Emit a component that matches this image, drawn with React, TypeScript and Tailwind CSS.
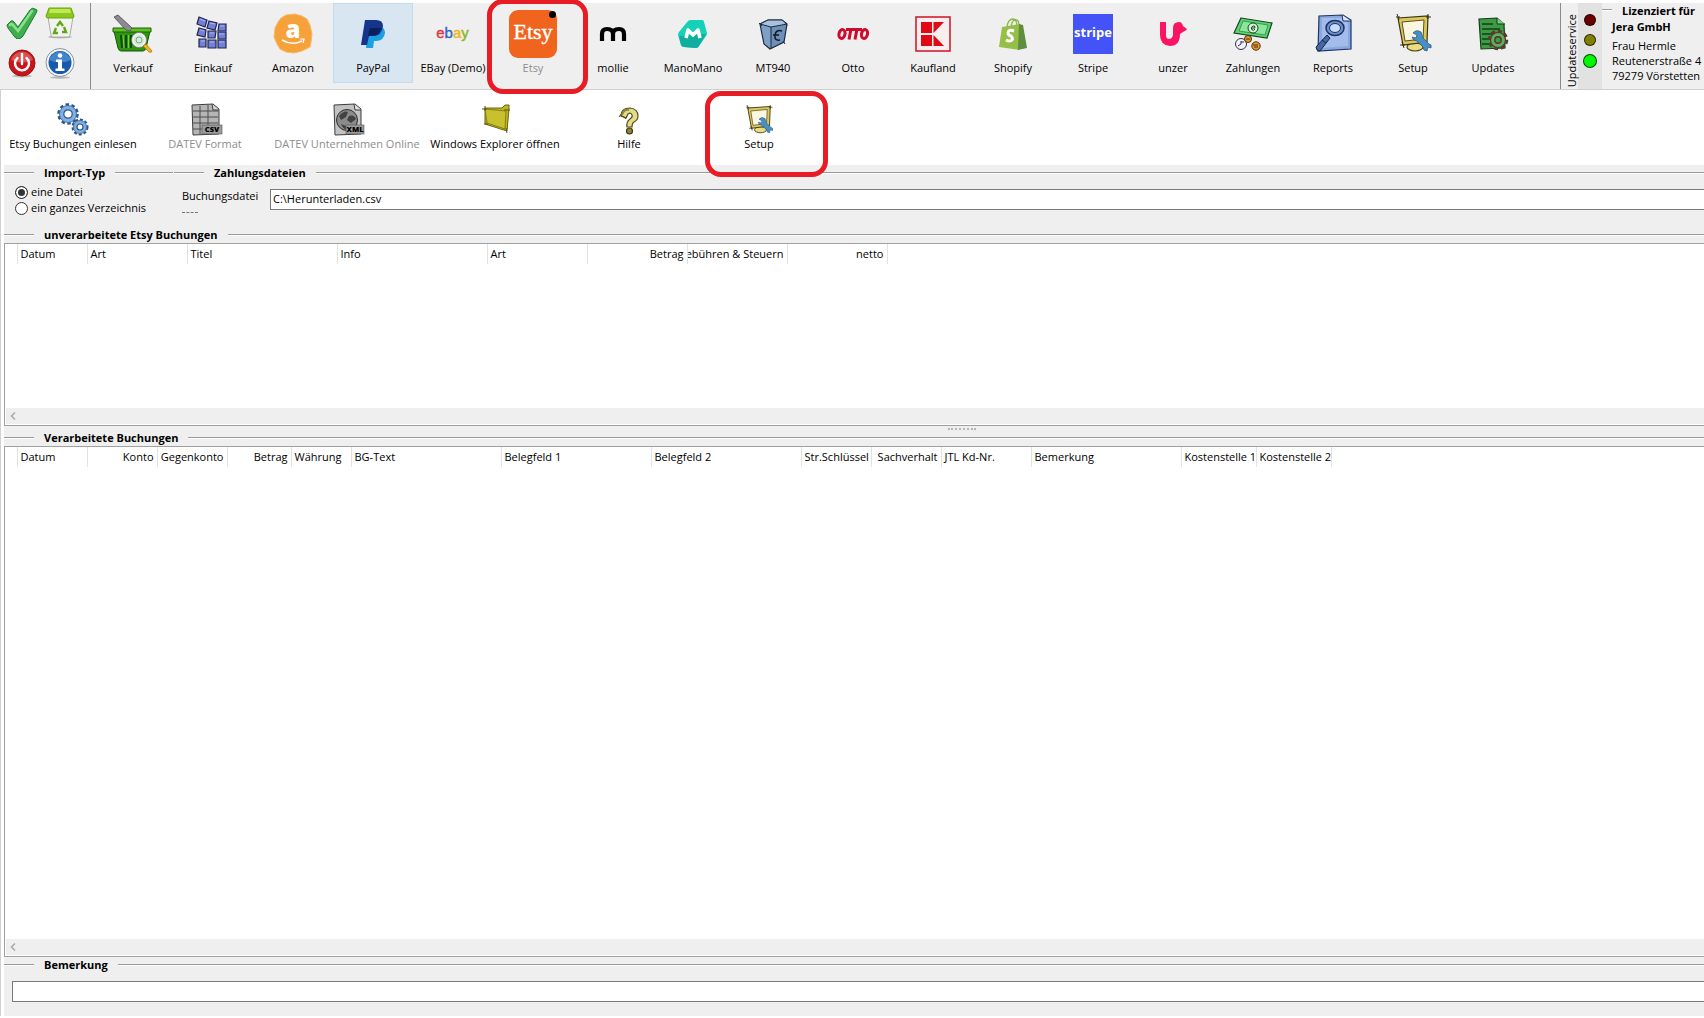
import type { ReactNode } from "react";

type IconProps = {
  className?: string;
};

type ToolItem = {
  label: string;
  icon: ReactNode;
  active?: boolean;
  disabled?: boolean;
  marked?: boolean;
};

type ActionItem = {
  label: string;
  icon: ReactNode;
  width: string;
  disabled?: boolean;
  marked?: boolean;
};

type Column = {
  label: string;
  width: string;
  right?: boolean;
};

const CheckIcon = () => (
  <svg className="w-8 h-8" viewBox="0 0 32 32">
    <path d="M1 18 5 14q2-1 3 1l4 5L24 3q2-3 5-1l2 1q0 2-2 5L17 29q-2 3-5 3-2 0-4-3L2 21q-1-2-1-3z" fill="#3fae4d" stroke="#1d7a35" strokeWidth="1" />
    <path d="M4 18q2-2 3 0l5 6L26 4" fill="none" stroke="#8be08c" strokeWidth="2.5" strokeLinecap="round" />
  </svg>
);

const BinIcon = () => (
  <svg className="w-8 h-8" viewBox="0 0 32 32">
    <ellipse cx="16" cy="30" rx="12" ry="1.5" fill="#b5b5b5" />
    <path d="M4 10h25l-3 18q0 2-2 2H9q-2 0-2-2z" fill="#f1f3ef" stroke="#a9aca6" />
    <path d="M5 1h22l3 8q0 2-2 2H4q-2 0-2-2z" fill="#8cc81e" stroke="#6ba50c" />
    <path d="M6 2h20l1 4H5z" fill="#c0e95a" />
    <path d="m13 19 3-4 3 4M20 20l2 5h-4M14 26h-4l2-5" fill="none" stroke="#62a51a" strokeWidth="2.4" />
  </svg>
);

const PowerIcon = () => (
  <svg className="w-8 h-8" viewBox="0 0 32 32">
    <ellipse cx="16" cy="29" rx="10" ry="1.5" fill="#bdbdbd" />
    <circle cx="16" cy="16" r="13" fill="#c9141c" stroke="#93191c" />
    <path d="M5 13a11.5 11.5 0 0 1 22 0q-11 5-22 0z" fill="#dc5050" />
    <path d="M11.5 11a7 7 0 1 0 9 0M16 7v10" fill="none" stroke="#fff" strokeWidth="2.4" strokeLinecap="round" />
  </svg>
);

const InfoIcon = () => (
  <svg className="w-8 h-8" viewBox="0 0 32 32">
    <ellipse cx="16" cy="30.5" rx="10" ry="1.2" fill="#b5b5b5" />
    <circle cx="16" cy="15.5" r="14" fill="#f5f5f5" stroke="#8d9299" />
    <circle cx="16" cy="15.5" r="11.5" fill="#1659ad" />
    <path d="M5 13a11.5 11.5 0 0 1 22 0q-11 5-22 0z" fill="#4285cb" />
    <circle cx="16" cy="8.5" r="2.3" fill="#fff" />
    <path d="M12 12.5h6v9h2.5V24h-9v-2.500H14V15h-2z" fill="#fff" />
  </svg>
);

const BasketIcon = () => (
  <svg className="w-12 h-12" viewBox="0 0 48 48">
    <path d="M5 21h36l-4 17q-1 3-3 3H12q-2 0-3-3z" fill="#2f9410" stroke="#14540a" />
    <path d="M4 18h38v4H4z" fill="#5fc21c" stroke="#1c5f0a" />
    <path d="M12 25l1 13M17 25v13M22 25v13M35 26l-1 9" stroke="#0f4a06" strokeWidth="2" />
    <path d="M14 25l1 13M19.5 25v13" stroke="#74d438" />
    <path d="m5 7 4-2 14 13-2 3-4-1z" fill="#8b8c8f" stroke="#5c5e61" />
    <circle cx="30" cy="30" r="6.5" fill="#d8ecdc" stroke="#f3f3f3" strokeWidth="2" />
    <circle cx="30" cy="30" r="7.5" fill="none" stroke="#777" strokeWidth=".7" />
    <circle cx="30" cy="30" r="3" fill="none" stroke="#7aa67e" />
    <path d="m34 36 3-2 6 7q0 2-3 1z" fill="#f2b01c" stroke="#a86f08" strokeWidth=".7" />
  </svg>
);

const BlocksIcon = () => (
  <svg className="w-12 h-12" viewBox="0 0 48 48">
    <g fill="#7480d6" stroke="#1f2450" strokeWidth="1.2">
      <path d="m10 7 8 3-2 7-8-3zM20 11l8 2-2 7-8-2zM30 14h7v7h-8z" />
      <path d="m10 18 7 2-1 7-8-2zM19 21h8l-1 7h-7zM29 22h8v7h-8z" />
      <path d="M10 29h7v8h-7zM19 30h8v8h-8zM29 30h8v8h-8z" />
    </g>
    <path d="m11 9 5 2M21 13l5 1M31 16h4M11 20l4 1M21 23h4M30 24h5M12 31h4M21 32h4M30 32h5" stroke="#aeb6f0" />
  </svg>
);

const AmazonIcon = () => (
  <svg className="w-12 h-12" viewBox="0 0 48 48">
    <path d="m17 5 9-1 7 2 5 3 3 6 2 9-1 8-1 5-8 4-8 2-8-1-6-3-3-5-3-7 1-9 3-6 3-4z" fill="#f6a13a" stroke="#f8b968" />
    <text x="24" y="28" textAnchor="middle" fontFamily="Open Sans" fontWeight="800" fontSize="24" fill="#fff">a</text>
    <path d="M13 30q10 6 20 1" fill="none" stroke="#fff" strokeWidth="1.6" />
    <path d="m31 29 4 0-1 4" fill="none" stroke="#fff" strokeWidth="1.2" />
  </svg>
);

const PayPalIcon = () => (
  <svg className="w-12 h-12" viewBox="0 0 48 48">
    <path d="M19 17h14q3 2 3 6-1 7-8 8h-3l-1 7h-7z" fill="#1ba1e2" />
    <path d="M16 10h11q7 0 7 6-1 10-10 10h-4l-2 9h-6z" fill="#16348c" />
    <path d="M21 18h11q-2 8-9 8h-4z" fill="#0b1f5c" />
  </svg>
);

const EbayIcon = () => (
  <svg className="w-12 h-12" viewBox="0 0 48 48">
    <text x="23.5" y="28" textAnchor="middle" fontFamily="Liberation Sans" fontSize="15" strokeWidth=".4">
      <tspan fill="#dd3a45" stroke="#dd3a45">e</tspan>
      <tspan fill="#2f66c4" stroke="#2f66c4">b</tspan>
      <tspan fill="#efb21c" stroke="#efb21c">a</tspan>
      <tspan fill="#86b81b" stroke="#86b81b">y</tspan>
    </text>
  </svg>
);

const EtsyIcon = () => (
  <svg className="w-12 h-12" viewBox="0 0 48 48">
    <rect width="48" height="48" rx="9" fill="#f1641e" />
    <text x="24" y="29" textAnchor="middle" fontFamily="Liberation Serif" fontSize="22" fill="#fff" stroke="#fff" strokeWidth=".4">Etsy</text>
    <circle cx="43.5" cy="4.5" r="3.5" />
  </svg>
);

const MollieIcon = () => (
  <svg className="w-12 h-12" viewBox="0 0 48 48">
    <path d="M13 31v-7q0-5 5-5 6 0 6 5v7-7q0-5 6-5 5 0 5 5v7" fill="none" stroke="#000" strokeWidth="4.2" />
  </svg>
);

const ManoManoIcon = () => (
  <svg className="w-12 h-12" viewBox="0 0 48 48">
    <path d="M19 11q1-1 3-1h11q2 0 2 2l3 11q0 2-1 3l-7 10q-1 2-3 2l-12-1q-2 0-3-2L9 25q0-2 1-3z" fill="#14d1b8" />
    <path d="m10 26 27-2-7 12q-1 2-3 2l-12-1q-2 0-3-2z" fill="#0fae9e" />
    <path d="m17 28 2-8 5 5 5-5 2 8" fill="none" stroke="#fff" strokeWidth="3.6" strokeLinejoin="round" />
  </svg>
);

const CubeIcon = () => (
  <svg className="w-12 h-12" viewBox="0 0 48 48">
    <path d="m11 14 8-4h14l5 4-3 18-14 7-6-5z" fill="#6d8fb8" stroke="#1d2b3f" strokeWidth="1.2" />
    <path d="m11 14 11 3 16-3-5-4H19z" fill="#a9c1dd" stroke="#1d2b3f" />
    <path d="m12 15 10 3 0 20-6-4z" fill="#7e9fc6" />
    <path d="M22 17v21M10 13l3 3M36 12l2 4M34 31l2 3" stroke="#1d2b3f" />
    <path d="M33 21q-6-2-7 4-1 6 5 5M24 25h6" fill="none" stroke="#101a28" strokeWidth="1.5" />
  </svg>
);

const OttoIcon = () => (
  <svg className="w-12 h-12" viewBox="0 0 48 48">
    <g fill="none" stroke="#cf0a2c" strokeWidth="3">
      <ellipse cx="13" cy="24" rx="3" ry="4.5" transform="rotate(14 13 24)" />
      <ellipse cx="35.5" cy="24" rx="3" ry="4.5" transform="rotate(14 35.5 24)" />
      <path d="M17 19.5h16M22 19l-2 10.500M28 19l-2 10.500" />
    </g>
  </svg>
);

const KauflandIcon = () => (
  <svg className="w-12 h-12" viewBox="0 0 48 48">
    <rect x="7" y="7" width="34" height="34" fill="#f7efef" stroke="#d1202f" strokeWidth="1.6" />
    <path d="M12 12h11v11H12zM12 25h11v11H12zM24.500 23V12H35zM24.500 25 35 36H24.500z" fill="#e10915" />
  </svg>
);

const ShopifyIcon = () => (
  <svg className="w-12 h-12" viewBox="0 0 48 48">
    <path d="M18 17q1-8 6-8 4 0 4 8M22 16q2-8 6-6 2 1 2 6" fill="none" stroke="#8db543" strokeWidth="1.3" />
    <path d="m13 17 18-3-1 26-20-3z" fill="#95bf47" />
    <path d="m30 14 4 1 4 23-9 2z" fill="#5e8e3e" />
    <path d="M25 21q-6-2-6 2 0 2 3 3 2 2 1 4-2 2-6 0" fill="none" stroke="#fff" strokeWidth="3" />
  </svg>
);

const StripeIcon = () => (
  <svg className="w-12 h-12" viewBox="0 0 48 48">
    <rect x="4" y="4" width="40" height="40" fill="#4353f7" />
    <text x="24" y="27" textAnchor="middle" fontFamily="Open Sans" fontWeight="700" fontSize="13" fill="#fff">stripe</text>
  </svg>
);

const UnzerIcon = () => (
  <svg className="w-12 h-12" viewBox="0 0 48 48">
    <path d="M11 12h6v13q0 4 3 4t4-4V18q0-6 6-6 3 0 4 4l4 3q0 1-4 3l-3 2q0 12-10 12-10-1-10-11z" fill="#fa1464" />
  </svg>
);

const MoneyIcon = () => (
  <svg className="w-12 h-12" viewBox="0 0 48 48">
    <path d="m12 8 31 5-5 15-33-5z" fill="#5fd076" stroke="#124a1c" strokeWidth="1.2" />
    <path d="m14 11 25 4-3 10-26-4z" fill="#8ce59b" stroke="#2b8a3b" strokeWidth=".8" />
    <circle cx="24" cy="18" r="5" fill="#d9f5dc" stroke="#124a1c" />
    <path d="M22 18h4q0-3-2-2-3 1-1 4 2 1 3-1" fill="none" stroke="#124a1c" />
    <circle cx="12" cy="34" r="5.5" fill="#f2f0fa" stroke="#33334e" />
    <path d="M12 34v-3M12 34l-3 2M12 32h3" stroke="#33334e" />
    <circle cx="19" cy="29" r="3.5" fill="#e39b36" stroke="#4e2c08" />
    <circle cx="27" cy="36" r="4.2" fill="#e39b36" stroke="#4e2c08" />
    <path d="M17 29h4M24 35h5M25 37h4" stroke="#4e2c08" />
  </svg>
);

const ReportIcon = () => (
  <svg className="w-12 h-12" viewBox="0 0 48 48">
    <path d="m10 6 24-1 8 5v29l-33 2z" fill="#89a8df" stroke="#1f3566" strokeWidth="1.2" />
    <path d="m13 8 20 0 6 5 0 23-26 2z" fill="#b4c9f0" opacity=".6" />
    <path d="m33 5 1 6 8 0" fill="#dbe6fa" stroke="#1f3566" />
    <ellipse cx="26" cy="18" rx="9" ry="7.5" fill="#6c8fd0" stroke="#1c3263" strokeWidth="1.5" />
    <ellipse cx="26" cy="18" rx="5.5" ry="4.5" fill="#c9dbf7" stroke="#1c3263" />
    <path d="m18 25 3 3-10 13-3-1-1-3z" fill="#4767a4" stroke="#14264d" />
    <path d="m13 30 4 3" stroke="#14264d" />
  </svg>
);

const SetupIcon = ({ className = "w-12 h-12" }: IconProps) => (
  <svg className={className} viewBox="0 0 48 48">
    <ellipse cx="26" cy="37" rx="8" ry="4" fill="#e9dc83" stroke="#4a4018" strokeWidth="1.2" />
    <path d="m9 8 30-2-1 26-24 3z" fill="#d9c85c" stroke="#3b3314" strokeWidth="1.2" />
    <path d="m13 12 22-2-1 19-18 2z" fill="#fbf6df" stroke="#5a4f20" />
    <path d="M7 7h4M8 4l2 6M37 7h5M39 4v5M11 35h5M13 32l2 6" stroke="#3b3314" />
    <path d="M24 23q3-4 8-1l2 6 6 6q3 0 2 4l-3-1-1 4q-4 0-4-4l-6-6q-4 0-5-4l4 1 1-3z" fill="#4a8fc4" stroke="#2a5f8d" strokeWidth=".8" />
  </svg>
);

const UpdatesIcon = () => (
  <svg className="w-12 h-12" viewBox="0 0 48 48">
    <path d="m10 9 18-1 7 6 1 24-24 1z" fill="#3d9a45" stroke="#143d18" strokeWidth="1.2" />
    <path d="m28 8 0 6h8" fill="#7cc681" stroke="#143d18" />
    <path d="M13 14h11M13 19h18M13 24h10M13 29h8M13 34h8" stroke="#143d18" strokeWidth="1.4" />
    <circle cx="29" cy="30" r="9" fill="none" stroke="#5b3a2a" strokeWidth="2.5" strokeDasharray="4 3" />
    <circle cx="29" cy="30" r="7.5" fill="#66a866" stroke="#4c3a26" strokeWidth="1.2" />
    <circle cx="29" cy="30" r="3.2" fill="#3d9a45" stroke="#4c3a26" strokeWidth="1.4" />
  </svg>
);

const GearsIcon = () => (
  <svg className="w-9 h-9" viewBox="0 0 36 36">
    <circle cx="13" cy="12" r="9.5" fill="none" stroke="#2f5688" strokeWidth="2.5" strokeDasharray="3.5 2.5" />
    <circle cx="13" cy="12" r="8.5" fill="#7fb0e6" stroke="#355f94" strokeWidth=".8" />
    <circle cx="13" cy="12" r="4.2" fill="#fff" stroke="#2f5688" strokeWidth="1.2" />
    <circle cx="25" cy="25" r="7.5" fill="none" stroke="#2f5688" strokeWidth="2" strokeDasharray="3 2" />
    <circle cx="25" cy="25" r="6.5" fill="#7fb0e6" stroke="#355f94" strokeWidth=".8" />
    <circle cx="25" cy="25" r="3" fill="#fff" stroke="#2f5688" strokeWidth="1.2" />
  </svg>
);

const CsvIcon = () => (
  <svg className="w-9 h-9" viewBox="0 0 36 36">
    <path d="m5 3 21-1 6 5v25l-26 1z" fill="#b5b5b5" stroke="#3d3d3d" />
    <path d="m25 2 1 6h6" fill="#d5d5d5" stroke="#3d3d3d" />
    <path d="M6 9h25M6 15h25M6 21h25M6 27h10M13 4v28M21 3v20" stroke="#4d4d4d" />
    <rect x="15" y="23" width="20" height="9" fill="#9b9b9b" stroke="#555" strokeWidth=".6" />
    <text x="25" y="30" textAnchor="middle" fontFamily="Open Sans" fontWeight="800" fontSize="7.5">CSV</text>
  </svg>
);

const XmlIcon = () => (
  <svg className="w-9 h-9" viewBox="0 0 36 36">
    <path d="m5 3 21-1 6 5v25l-26 1z" fill="#c2c2c2" stroke="#3d3d3d" />
    <path d="m25 2 1 6h6" fill="#e0e0e0" stroke="#3d3d3d" />
    <circle cx="18" cy="18" r="10.5" fill="#8b8b8b" stroke="#2d2d2d" />
    <path d="M10 14q5-6 9-4l-2 5-5 3zM20 14q5-2 7 3l-5 4-4-3zM12 22l5 2 1 4q-4-1-6-6z" fill="#424242" />
    <rect x="17" y="23" width="18" height="9" fill="#9b9b9b" stroke="#555" strokeWidth=".6" />
    <text x="26" y="30" textAnchor="middle" fontFamily="Open Sans" fontWeight="800" fontSize="7.5">XML</text>
  </svg>
);

const FolderIcon = () => (
  <svg className="w-9 h-9" viewBox="0 0 36 36">
    <path d="m8 6 17 0 3-3h4l0 4-2 22-22-7z" fill="#bdb524" stroke="#6b6510" />
    <path d="m8 7 21 2-1 18-18-6z" fill="#c8c02c" stroke="#6b6510" strokeWidth=".7" />
    <path d="M5 7h5M8 4v5M7 22h4M29 26l1 5M27 8h6" stroke="#5a540c" />
  </svg>
);

const HelpIcon = () => (
  <svg className="w-9 h-9" viewBox="0 0 36 36">
    <path d="M10 14q0-8 9-8 8 1 8 8 0 4-4 6-2 1-2 5h-5q-1-5 3-8 3-2 2-4-1-3-4-1l-2 4z" fill="#e3dc8a" stroke="#55501a" strokeWidth="1.2" />
    <path d="m9 13 6 3M8 15l3-4M14 17l2-3" stroke="#55501a" />
    <path d="M11 13q2-6 7-5" fill="none" stroke="#8e8736" strokeWidth="2" />
    <circle cx="18.5" cy="29" r="3" fill="#8e8736" stroke="#3f3b10" strokeWidth="1.2" />
  </svg>
);

const toolItems: ToolItem[] = [
  { label: "Verkauf", icon: <BasketIcon /> },
  { label: "Einkauf", icon: <BlocksIcon /> },
  { label: "Amazon", icon: <AmazonIcon /> },
  { label: "PayPal", icon: <PayPalIcon />, active: true },
  { label: "EBay (Demo)", icon: <EbayIcon /> },
  { label: "Etsy", icon: <EtsyIcon />, disabled: true, marked: true },
  { label: "mollie", icon: <MollieIcon /> },
  { label: "ManoMano", icon: <ManoManoIcon /> },
  { label: "MT940", icon: <CubeIcon /> },
  { label: "Otto", icon: <OttoIcon /> },
  { label: "Kaufland", icon: <KauflandIcon /> },
  { label: "Shopify", icon: <ShopifyIcon /> },
  { label: "Stripe", icon: <StripeIcon /> },
  { label: "unzer", icon: <UnzerIcon /> },
  { label: "Zahlungen", icon: <MoneyIcon /> },
  { label: "Reports", icon: <ReportIcon /> },
  { label: "Setup", icon: <SetupIcon /> },
  { label: "Updates", icon: <UpdatesIcon /> },
];

const actionItems: ActionItem[] = [
  { label: "Etsy Buchungen einlesen", icon: <GearsIcon />, width: "w-35" },
  { label: "DATEV Format", icon: <CsvIcon />, width: "w-31", disabled: true },
  { label: "DATEV Unternehmen Online", icon: <XmlIcon />, width: "w-40", disabled: true },
  { label: "Windows Explorer öffnen", icon: <FolderIcon />, width: "w-34" },
  { label: "Hilfe", icon: <HelpIcon />, width: "w-33" },
  { label: "Setup", icon: <SetupIcon className="w-9 h-9" />, width: "w-32", marked: true },
];

const openColumns: Column[] = [
  { label: "Datum", width: "w-[70px]" },
  { label: "Art", width: "w-[100px]" },
  { label: "Titel", width: "w-[150px]" },
  { label: "Info", width: "w-[150px]" },
  { label: "Art", width: "w-[100px]" },
  { label: "Betrag", width: "w-[100px]", right: true },
  { label: "Gebühren & Steuern", width: "w-[100px]", right: true },
  { label: "netto", width: "w-[100px]", right: true },
];

const doneColumns: Column[] = [
  { label: "Datum", width: "w-[70px]" },
  { label: "Konto", width: "w-[70px]", right: true },
  { label: "Gegenkonto", width: "w-[70px]", right: true },
  { label: "Betrag", width: "w-[64px]", right: true },
  { label: "Währung", width: "w-[60px]" },
  { label: "BG-Text", width: "w-[150px]" },
  { label: "Belegfeld 1", width: "w-[150px]" },
  { label: "Belegfeld 2", width: "w-[150px]" },
  { label: "Str.Schlüssel", width: "w-[70px]" },
  { label: "Sachverhalt", width: "w-[70px]", right: true },
  { label: "JTL Kd-Nr.", width: "w-[90px]" },
  { label: "Bemerkung", width: "w-[150px]" },
  { label: "Kostenstelle 1", width: "w-[75px]" },
  { label: "Kostenstelle 2", width: "w-[75px]" },
];

const Rule = ({ className = "" }: IconProps) => (
  <span className={`h-0.5 border-t border-[#9a9a9a] bg-white ${className}`} />
);

const GroupTitle = ({ children, id }: { children: ReactNode; id?: string }) => (
  <div className="flex items-center h-4">
    <Rule className="w-7.5 shrink-0" />
    <h2 id={id} className="px-2.5 font-bold leading-4 whitespace-nowrap">
      {children}
    </h2>
    <Rule className="flex-1" />
  </div>
);

const Grid = ({ columns, labelledBy, className = "" }: { columns: Column[]; labelledBy: string; className?: string }) => (
  <div className={`flex flex-col bg-white border border-r-0 border-[#a0a0a0] overflow-hidden ${className}`}>
    <table className="table-fixed w-full" aria-labelledby={labelledBy}>
      <thead>
        <tr className="h-5">
          <th className="w-3 p-0 border-r border-[#e2e2e2]" />
          {columns.map((column, i) => (
            <th key={i} className={`p-0 font-normal border-r border-[#e2e2e2] ${column.width}`}>
              <div
                className={`flex overflow-hidden whitespace-nowrap ${column.right ? "justify-end pr-[3px]" : "pl-[3px]"}`}
              >
                <span className="shrink-0">{column.label}</span>
              </div>
            </th>
          ))}
          <th className="p-0" />
        </tr>
      </thead>
      <tbody />
    </table>
    <div className="mt-auto mb-px ml-px h-4 bg-[#efefef] flex items-center pl-1">
      <svg className="w-1.5 h-2" viewBox="0 0 6 8">
        <path d="M5 0.5 1.500 4 5 7.500" fill="none" stroke="#a8a8a8" strokeWidth="1.5" />
      </svg>
    </div>
  </div>
);

const MainToolbar = () => (
  <header className="flex h-[87px] mt-[3px] bg-[#efefef] border-b border-[#d0d0d0] shrink-0">
    <div className="grid grid-cols-[38px_38px] gap-y-2 content-start w-[91px] pl-1.5 pt-1 shrink-0 border-r border-[#8a8a8a]">
      <button aria-label="Übernehmen"><CheckIcon /></button>
      <button aria-label="Papierkorb"><BinIcon /></button>
      <button aria-label="Beenden"><PowerIcon /></button>
      <button aria-label="Info"><InfoIcon /></button>
    </div>
    <nav className="flex flex-1 pl-0.5">
      {toolItems.map((item) => (
        <div key={item.label} className="relative w-20 h-20 shrink-0">
          <button
            disabled={item.disabled}
            className={`flex flex-col items-center w-full h-full pt-1.5 border whitespace-nowrap ${
              item.active ? "bg-[#d8e6f1] border-[#c0dcf3]" : "border-transparent"
            } ${item.disabled ? "text-[#8d8d8d]" : ""}`}
          >
            {item.icon}
            <span className="leading-4 mt-0.5">{item.label}</span>
          </button>
          {item.marked && (
            <div className="absolute -top-1 -left-1.5 w-[101px] h-[95px] border-5 border-[#e81c24] rounded-2xl z-1 pointer-events-none" />
          )}
        </div>
      ))}
    </nav>
    <div className="flex items-end justify-end w-[18px] pb-0.5 shrink-0 border-l border-[#8a8a8a]">
      <span className="[writing-mode:vertical-rl] rotate-180 whitespace-nowrap leading-3">Updateservice</span>
    </div>
    <div className="flex flex-col items-center w-6 pt-[11px] gap-2 bg-[#e2e2e2] shrink-0">
      <span className="w-3 h-3 rounded-full bg-[#6b0000] border border-black/70" />
      <span className="w-3 h-3 rounded-full bg-[#808000] border border-black/70" />
      <span className="w-3.5 h-3.5 rounded-full bg-[#00f800] border border-black/70" />
    </div>
    <div className="w-[102px] shrink-0 whitespace-nowrap">
      <div className="flex">
        <Rule className="w-2.5 mt-1.5" />
        <b className="pl-2.5 leading-4">Lizenziert für</b>
      </div>
      <div className="pl-2.5">
        <b className="block leading-4">Jera GmbH</b>
        <address className="not-italic leading-[15px] pt-[3px]">
          Frau Hermle
          <br />
          Reutenerstraße 4
          <br />
          79279 Vörstetten
        </address>
      </div>
    </div>
  </header>
);

const ActionToolbar = () => (
  <div className="flex h-[75px] pl-0.5 bg-white shrink-0">
    {actionItems.map((item) => (
      <div key={item.label} className={`relative shrink-0 ${item.width}`}>
        <button
          disabled={item.disabled}
          className={`flex flex-col items-center w-full pt-3 whitespace-nowrap ${item.disabled ? "text-[#8d8d8d]" : ""}`}
        >
          {item.icon}
          <span className="leading-4 -mt-0.5">{item.label}</span>
        </button>
        {item.marked && (
          <div className="absolute top-px left-2.5 w-[123px] h-[86px] border-5 border-[#e81c24] rounded-2xl z-1 pointer-events-none" />
        )}
      </div>
    ))}
  </div>
);

const RadioOption = ({ label, checked }: { label: string; checked?: boolean }) => (
  <label className="flex items-center gap-[3px] h-4 whitespace-nowrap">
    <input
      type="radio"
      name="importTyp"
      defaultChecked={checked}
      className="appearance-none w-[13px] h-[13px] rounded-full border border-[#333] bg-white checked:bg-[#333] checked:shadow-[inset_0_0_0_2px_#fff]"
    />
    {label}
  </label>
);

const App = () => {
  return (
    <div className="flex flex-col min-h-screen bg-white pb-0.5 overflow-hidden font-['Open_Sans','Noto_Sans',sans-serif] text-[11px] leading-4 text-black">
      <MainToolbar />
      <main className="flex flex-col flex-1 border-l border-[#d0d0d0]">
        <ActionToolbar />
        <div className="flex flex-col flex-1 ml-[3px] bg-[#efefef]">
          <div className="flex h-[62px]">
            <section className="w-[169px] shrink-0">
              <GroupTitle>Import-Typ</GroupTitle>
              <div className="pl-[11px] pt-[3px]">
                <RadioOption label="eine Datei" checked />
                <RadioOption label="ein ganzes Verzeichnis" />
              </div>
            </section>
            <section className="flex-1 pl-px">
              <GroupTitle>Zahlungsdateien</GroupTitle>
              <div className="flex pl-2 pt-2">
                <div className="w-22 shrink-0 -mt-px">
                  <label htmlFor="buchungsdatei" className="block leading-4">
                    Buchungsdatei
                  </label>
                  <div className="w-4 mt-2 border-t border-dashed border-[#777]" />
                </div>
                <input
                  id="buchungsdatei"
                  defaultValue="C:\Herunterladen.csv"
                  className="flex-1 h-[21px] px-0.5 pb-0.5 bg-white border border-r-0 border-[#7a7a7a] outline-none"
                />
              </div>
            </section>
          </div>
          <GroupTitle id="offen">unverarbeitete Etsy Buchungen</GroupTitle>
          <Grid columns={openColumns} labelledBy="offen" className="h-[183px] shrink-0" />
          <div className="flex justify-center h-1 pt-0.5 pl-54">
            <div className="w-7 h-0.5 border-t-2 border-dotted border-[#b5b5b5]" />
          </div>
          <GroupTitle id="verarbeitet">Verarbeitete Buchungen</GroupTitle>
          <Grid columns={doneColumns} labelledBy="verarbeitet" className="flex-1" />
          <GroupTitle id="bemerkung">Bemerkung</GroupTitle>
          <div className="flex pl-2 pt-2 pb-3.5">
            <input
              aria-labelledby="bemerkung"
              className="flex-1 h-[21px] px-0.5 pb-0.5 bg-white border border-r-0 border-[#7a7a7a] outline-none"
            />
          </div>
        </div>
      </main>
    </div>
  );
};

export default App;
